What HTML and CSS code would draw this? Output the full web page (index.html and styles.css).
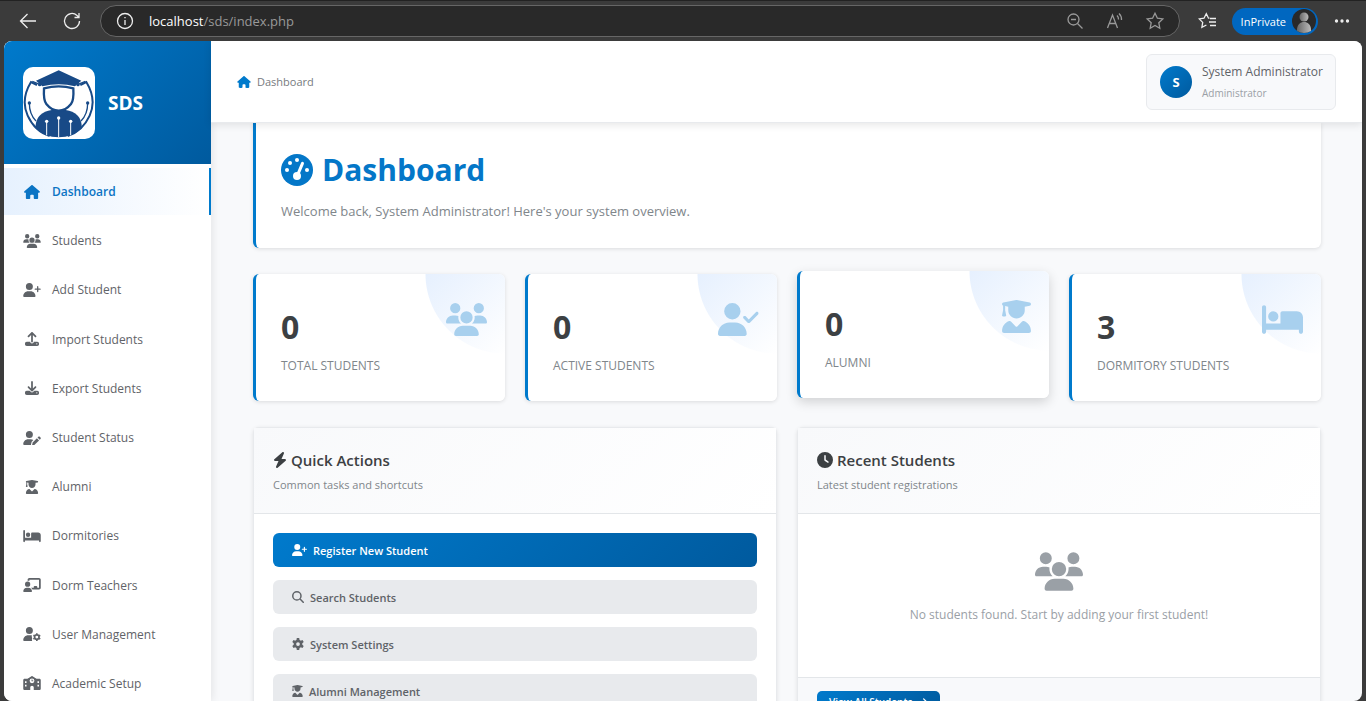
FILE: index.html
```html
<!DOCTYPE html>
<html lang="en">
<head>
<meta charset="utf-8">
<title>Dashboard - SDS</title>
<link rel="stylesheet" href="styles.css">
</head>
<body>
<svg class="defs" aria-hidden="true">
  <symbol id="home" viewBox="0 0 576 512"><path d="M575.8 255.5c0 18-15 32.1-32 32.1h-32l.7 160.2V472c0 22.1-17.9 40-40 40H392c-22.1 0-40-17.9-40-40V384c0-17.700-14.300-32-32-32H256c-17.700 0-32 14.300-32 32v88c0 22.100-17.900 40-40 40H104c-22.100 0-40-17.900-40-40V287.600H32c-18 0-32-14-32-32.100c0-9 3-17 10-24L266.400 8c7-7 15-8 22-8s15 2 21 7L564.800 231.500c8 7 12 15 11 24z"/></symbol>
  <symbol id="users" viewBox="0 0 640 512"><path d="M144 0a80 80 0 1 1 0 160A80 80 0 1 1 144 0zM512 0a80 80 0 1 1 0 160A80 80 0 1 1 512 0zM0 298.700C0 239.800 47.800 192 106.700 192h42.700c15.900 0 31 3.500 44.600 9.700c-1.300 7.200-1.900 14.700-1.900 22.300c0 38.200 16.800 72.500 43.300 96H21.300C9.600 320 0 310.400 0 298.700zM405.300 320h-.7c26.600-23.500 43.300-57.800 43.300-96c0-7.600-.7-15-1.900-22.300c13.600-6.300 28.700-9.700 44.600-9.700h42.700C592.200 192 640 239.800 640 298.700c0 11.800-9.600 21.300-21.300 21.300H405.300zM224 224a96 96 0 1 1 192 0 96 96 0 1 1 -192 0zM128 485.300C128 411.700 187.700 352 261.300 352H378.700C452.300 352 512 411.700 512 485.300c0 14.700-11.900 26.700-26.700 26.700H154.700c-14.700 0-26.700-11.900-26.700-26.700z"/></symbol>
  <symbol id="user-plus" viewBox="0 0 640 512"><path d="M96 128a128 128 0 1 1 256 0A128 128 0 1 1 96 128zM0 482.300C0 383.800 79.800 304 178.300 304h91.400C368.200 304 448 383.800 448 482.300c0 16.400-13.300 29.700-29.700 29.700H29.700C13.300 512 0 498.700 0 482.300zM504 312V248H440c-13.300 0-24-10.700-24-24s10.700-24 24-24h64V136c0-13.300 10.700-24 24-24s24 10.700 24 24v64h64c13.300 0 24 10.700 24 24s-10.700 24-24 24H552v64c0 13.300-10.700 24-24 24s-24-10.700-24-24z"/></symbol>
  <symbol id="user-check" viewBox="0 0 640 512"><path d="M96 128a128 128 0 1 1 256 0A128 128 0 1 1 96 128zM0 482.300C0 383.800 79.800 304 178.300 304h91.400C368.200 304 448 383.800 448 482.300c0 16.400-13.300 29.700-29.700 29.700H29.700C13.300 512 0 498.700 0 482.300zM625 177L497 305c-9.400 9.400-24.600 9.400-33.900 0l-64-64c-9.400-9.400-9.400-24.600 0-33.900s24.600-9.400 33.900 0l47 47L591 143c9.400-9.400 24.600-9.400 33.900 0s9.400 24.600 0 33.900z"/></symbol>
  <symbol id="upload" viewBox="0 0 512 512"><path fill-rule="evenodd" d="M288 109.300V352c0 17.700-14.300 32-32 32s-32-14.300-32-32V109.300l-73.400 73.400c-12.500 12.500-32.800 12.500-45.300 0s-12.500-32.800 0-45.300l128-128c12.500-12.500 32.800-12.500 45.300 0l128 128c12.500 12.500 12.500 32.800 0 45.300s-32.800 12.500-45.300 0L288 109.300zM64 352H192c0 35.300 28.700 64 64 64s64-28.700 64-64H448c35.300 0 64 28.700 64 64v32c0 35.300-28.700 64-64 64H64c-35.300 0-64-28.700-64-64V416c0-35.300 28.700-64 64-64zM432 456a24 24 0 1 0 0-48 24 24 0 1 0 0 48z"/></symbol>
  <symbol id="download" viewBox="0 0 512 512"><path fill-rule="evenodd" d="M288 32c0-17.700-14.300-32-32-32s-32 14.300-32 32V274.700l-73.400-73.400c-12.500-12.500-32.800-12.500-45.300 0s-12.500 32.800 0 45.300l128 128c12.500 12.500 32.800 12.500 45.300 0l128-128c12.500-12.500 12.500-32.800 0-45.300s-32.800-12.500-45.300 0L288 274.700V32zM64 352c-35.300 0-64 28.700-64 64v32c0 35.300 28.700 64 64 64H448c35.300 0 64-28.700 64-64V416c0-35.300-28.700-64-64-64H346.500l-45.300 45.300c-25 25-65.500 25-90.500 0L165.500 352H64zm368 56a24 24 0 1 1 0 48 24 24 0 1 1 0-48z"/></symbol>
  <symbol id="user-pen" viewBox="0 0 640 512"><path d="M96 128a128 128 0 1 1 256 0A128 128 0 1 1 96 128zM0 482c0-98 80-178 178-178h92c36 0 70 11 98 29l-49 50c-8 8-13 18-16 28l-18 70c-3 11-2 22 2 31H30c-17 0-30-13-30-30zM551 211c15-15 40-15 55 0l24 24c15 15 15 40 0 55l-29 30-79-79 29-30zM336 427l163-163 79 79-163 163-7 4-78 20-8-8 20-88z"/></symbol>
  <symbol id="graduate" viewBox="0 0 448 512"><path d="M219.300 .5c3.100-.6 6.300-.6 9.400 0l200 40C439.900 42.700 448 52.600 448 64s-8.100 21.300-19.300 23.500L352 102.900V160c0 70.700-57.300 128-128 128s-128-57.300-128-128V102.900L48 93.300v65.100l15.700 78.400c.9 4.700-.3 9.600-3.300 13.300s-7.600 5.900-12.400 5.900H16c-4.800 0-9.300-2.100-12.400-5.900s-4.300-8.600-3.300-13.300L16 158.400V86.600C6.500 83.300 0 74.300 0 64C0 52.600 8.100 42.700 19.300 40.500l200-40zM111.900 327.700c10.500-3.400 21.800 .4 29.400 8.500l71 75.500c6.300 6.700 17 6.700 23.300 0l71-75.500c7.600-8.100 18.900-11.900 29.400-8.500C401 348.600 448 409.400 448 481.300c0 17-13.800 30.700-30.700 30.700H30.700C13.800 512 0 498.200 0 481.300c0-71.900 47-132.700 111.900-153.600z"/></symbol>
  <symbol id="bed" viewBox="0 0 640 512"><path d="M32 32c17.700 0 32 14.300 32 32V320H288V160c0-17.700 14.300-32 32-32H544c53 0 96 43 96 96V448c0 17.700-14.300 32-32 32s-32-14.300-32-32V416H64v32c0 17.700-14.300 32-32 32s-32-14.300-32-32V64C0 46.300 14.300 32 32 32zm144 96a80 80 0 1 1 0 160 80 80 0 1 1 0-160z"/></symbol>
  <symbol id="teacher" viewBox="0 0 640 512"><path d="M160 64c0-35 29-64 64-64h352c35 0 64 29 64 64v288c0 35-29 64-64 64H337c-12-27-31-49-55-64h102v-32c0-18 14-32 32-32h64c18 0 32 14 32 32v32h64V64H224v49c-19-11-41-17-64-17V64zM64 224a96 96 0 1 1 192 0 96 96 0 1 1-192 0zM0 485c0-73 60-133 133-133h54c73 0 133 60 133 133 0 15-12 27-27 27H27c-15 0-27-12-27-27z"/></symbol>
  <symbol id="user-gear" viewBox="0 0 640 512"><path d="M96 128a128 128 0 1 1 256 0A128 128 0 1 1 96 128zM0 482c0-98 80-178 178-178h92c17 0 34 2 49 7-10 22-12 48-2 71l12 28-10 28c-8 26-4 52 8 74H30c-17 0-30-13-30-30z"/><circle cx="496" cy="370" r="82" fill="none" stroke="currentColor" stroke-width="62"/><path d="M466 228h60v54h-60zM466 458h60v54h-60zM356 325l30-52 48 28-30 52zM558 438l30-52 48 28-30 52zM356 414l30 52 48-28-30-52zM558 301l30 52 48-28-30-52z"/></symbol>
  <symbol id="school" viewBox="0 0 640 512"><path fill-rule="evenodd" d="M302 5c11-7 25-7 36 0l147 91h107c26 0 48 22 48 48v320c0 26-22 48-48 48H384v-96c0-35-29-64-64-64s-64 29-64 64v96H48c-26 0-48-22-48-48V144c0-26 22-48 48-48h107zM64 192v64h56v-64zM64 320v64h56v-64zM520 192v64h56v-64zM520 320v64h56v-64zM320 88a88 88 0 1 0 0 176 88 88 0 1 0 0-176zM304 128h32v32h32v32h-64z"/></symbol>
  <symbol id="gauge" viewBox="0 0 512 512"><circle cx="256" cy="256" r="256"/><g fill="#fff"><circle cx="96" cy="256" r="32"/><circle cx="144" cy="144" r="32"/><circle cx="256" cy="96" r="32"/><circle cx="416" cy="256" r="32"/><circle cx="256" cy="352" r="64"/></g><path d="M268 330L344 150" stroke="#fff" stroke-width="48" stroke-linecap="round"/></symbol>
  <symbol id="bolt" viewBox="0 0 448 512"><path d="M349.400 44.600c5.900-13.700 1.500-29.700-10.600-38.500s-28.600-8-39.900 1.800l-256 224c-10 8.800-13.600 22.900-8.900 35.300S50.700 288 64 288H175.500L98.600 467.400c-5.900 13.700-1.500 29.700 10.600 38.500s28.600 8 39.900-1.800l256-224c10-8.800 13.600-22.900 8.900-35.300s-16.600-20.700-30-20.700H272.500L349.400 44.600z"/></symbol>
  <symbol id="clock" viewBox="0 0 512 512"><path fill-rule="evenodd" d="M256 0a256 256 0 1 1 0 512A256 256 0 1 1 256 0zM232 120V256c0 8 4 15.500 10.700 20l96 64c11 7.400 25.900 4.400 33.300-6.700s4.400-25.900-6.700-33.300L280 243.200V120c0-13.300-10.700-24-24-24s-24 10.700-24 24z"/></symbol>
  <symbol id="search" viewBox="0 0 512 512"><path d="M365 365L480 480" stroke="currentColor" stroke-width="64" stroke-linecap="round"/><circle cx="208" cy="208" r="176" fill="none" stroke="currentColor" stroke-width="64"/></symbol>
  <symbol id="gear" viewBox="0 0 512 512"><circle cx="256" cy="256" r="132" fill="none" stroke="currentColor" stroke-width="104"/><path d="M204 4h104l18 110H186zM204 508h104l18-110H186zM12 175l52-90 104 40-70 121zM448 427l52-90-86-71-70 121zM12 337l52 90 104-40-70-121zM448 85l52 90-86 71-70-121z"/></symbol>
  <symbol id="arrow" viewBox="0 0 448 512"><path d="M32 256H410M256 96L416 256 256 416" fill="none" stroke="currentColor" stroke-width="64" stroke-linecap="round" stroke-linejoin="round"/></symbol>
</svg>

<header class="browser">
  <button class="tool" aria-label="Back"><svg viewBox="0 0 20 20"><path d="M18 10H2.500M9.500 3L2.500 10l7 7"/></svg></button>
  <button class="tool" aria-label="Refresh"><svg viewBox="0 0 20 20"><path d="M17.500 10a7.500 7.500 0 1 1-2.500-5.600L17 6.500M17 2v4.500h-4.500"/></svg></button>
  <div class="address">
    <svg class="thin" viewBox="0 0 20 20"><circle cx="10" cy="10" r="7.500"/><path d="M10 9v5M10 6v1.300"/></svg>
    <span class="url"><span class="host">localhost</span>/sds/index.php</span>
    <button class="tool dim" aria-label="Zoom out"><svg viewBox="0 0 20 20"><circle cx="8.500" cy="8.500" r="5.500"/><path d="M12.500 12.500l5 5M6 8.500h5"/></svg></button>
    <button class="tool dim" aria-label="Read aloud"><svg viewBox="0 0 20 20"><path d="M2.500 17L7.500 4l5 13M4.300 12.500h6.400M12 4.500a5 5 0 0 1 1.500 4M14 2.500a8 8 0 0 1 2.500 6.500"/></svg></button>
    <button class="tool dim" aria-label="Add to favorites"><svg viewBox="0 0 20 20"><path d="M10 2.200l2.400 5 5.400.7-4 3.800 1 5.500-4.800-2.700-4.800 2.700 1-5.500-4-3.800 5.400-.7z"/></svg></button>
  </div>
  <button class="tool" aria-label="Favorites"><svg viewBox="0 0 20 20"><path d="M11.500 7.200h-1L8.300 2.800 6 7.200l-4.800.7 3.500 3.500-.8 5 4.500-2.400M12 7.500h6M11 11h7M12 14.500h6"/></svg></button>
  <button class="private">InPrivate<svg viewBox="0 0 24 24"><defs><linearGradient id="face"><stop offset="0" stop-color="#666"/><stop offset="1" stop-color="#bbb"/></linearGradient></defs><circle cx="12" cy="12" r="12" fill="#292929"/><circle cx="12" cy="8" r="4.500" fill="url(#face)"/><path d="M5 22c-1-12 15-12 14 0q-7 4-14 0z" fill="url(#face)"/></svg></button>
  <button class="tool more" aria-label="Settings and more"><svg viewBox="0 0 20 20"><circle cx="4.500" cy="10" r="1"/><circle cx="10" cy="10" r="1"/><circle cx="15.500" cy="10" r="1"/></svg></button>
</header>

<div class="page">
  <aside class="sidebar">
    <div class="brand">
      <svg class="logo" viewBox="0 0 216 216" role="img" aria-label="SDS logo">
        <rect width="216" height="216" rx="30" fill="#fff"/>
        <clipPath id="disc"><circle cx="107" cy="108" r="103"/></clipPath>
        <g clip-path="url(#disc)">
          <path d="M38 216v-42q4-38 48-45h42q44 7 48 45v42z" fill="#184a87"/>
        </g>
        <path d="M63 64Q107 52 151 64q2 36-7 47-16 20-37 20t-37-20q-9-11-7-47z" fill="#fff" stroke="#184a87" stroke-width="7"/>
        <path d="M107 10l68 31-19 17q-48-12-98 0L39 41z" fill="#184a87"/>
        <g fill="none" stroke="#184a87" stroke-width="6">
          <path d="M42 54L24 45Q-8 98 14 146q22 48 66 61M172 54l18-9q32 53 10 101-22 48-66 61"/>
          <path d="M19 108q0 34 20 54M194 108q0 34-20 54" stroke-width="4"/>
        </g>
        <path d="M28 43l22 9M187 43l-22 9" stroke="#184a87" stroke-width="4"/>
        <g fill="#184a87"><circle cx="19" cy="108" r="5"/><circle cx="194" cy="108" r="5"/><circle cx="50" cy="53" r="5"/><circle cx="165" cy="53" r="5"/></g>
        <g fill="#fff"><circle cx="71" cy="163" r="5"/><circle cx="107" cy="153" r="5"/><circle cx="143" cy="163" r="5"/></g>
        <path d="M71 163v42M107 153v58M143 163v42" stroke="#fff" stroke-width="3"/>
      </svg>
      <span class="brand-name">SDS</span>
    </div>
    <nav class="menu">
      <a class="active" href="#"><svg><use href="#home"/></svg>Dashboard</a>
      <a href="#"><svg><use href="#users"/></svg>Students</a>
      <a href="#"><svg><use href="#user-plus"/></svg>Add Student</a>
      <a href="#"><svg><use href="#upload"/></svg>Import Students</a>
      <a href="#"><svg><use href="#download"/></svg>Export Students</a>
      <a href="#"><svg><use href="#user-pen"/></svg>Student Status</a>
      <a href="#"><svg><use href="#graduate"/></svg>Alumni</a>
      <a href="#"><svg><use href="#bed"/></svg>Dormitories</a>
      <a href="#"><svg><use href="#teacher"/></svg>Dorm Teachers</a>
      <a href="#"><svg><use href="#user-gear"/></svg>User Management</a>
      <a href="#"><svg><use href="#school"/></svg>Academic Setup</a>
    </nav>
  </aside>

  <div class="main">
    <header class="topbar">
      <div class="crumb"><svg><use href="#home"/></svg>Dashboard</div>
      <div class="user">
        <span class="avatar">S</span>
        <div class="who"><span class="name">System Administrator</span><span class="role">Administrator</span></div>
      </div>
    </header>

    <main class="content">
      <section class="welcome">
        <h1><svg><use href="#gauge"/></svg>Dashboard</h1>
        <p>Welcome back, System Administrator! Here's your system overview.</p>
      </section>

      <section class="stats">
        <article class="stat"><div><strong>0</strong><span>TOTAL STUDENTS</span></div><svg><use href="#users"/></svg></article>
        <article class="stat"><div><strong>0</strong><span>ACTIVE STUDENTS</span></div><svg><use href="#user-check"/></svg></article>
        <article class="stat raised"><div><strong>0</strong><span>ALUMNI</span></div><svg class="slim"><use href="#graduate"/></svg></article>
        <article class="stat"><div><strong>3</strong><span>DORMITORY STUDENTS</span></div><svg><use href="#bed"/></svg></article>
      </section>

      <section class="panels">
        <article class="panel">
          <header><h2><svg class="narrow"><use href="#bolt"/></svg>Quick Actions</h2><p>Common tasks and shortcuts</p></header>
          <div class="actions">
            <a class="primary" href="#"><svg class="wide"><use href="#user-plus"/></svg>Register New Student</a>
            <a href="#"><svg><use href="#search"/></svg>Search Students</a>
            <a href="#"><svg><use href="#gear"/></svg>System Settings</a>
            <a href="#"><svg class="narrow"><use href="#graduate"/></svg>Alumni Management</a>
          </div>
        </article>
        <article class="panel">
          <header><h2><svg><use href="#clock"/></svg>Recent Students</h2><p>Latest student registrations</p></header>
          <div class="empty"><svg><use href="#users"/></svg><p>No students found. Start by adding your first student!</p></div>
          <footer><a href="#">View All Students<svg><use href="#arrow"/></svg></a></footer>
        </article>
      </section>
    </main>
  </div>
</div>
</body>
</html>
```
FILE: styles.css
```css
* { box-sizing: border-box; }

body {
  margin: 0;
  height: 100vh;
  display: flex;
  flex-direction: column;
  overflow: hidden;
  background: #3b3b3b;
  color: #5f6368;
  font-family: "Open Sans", "Noto Sans", sans-serif;
  font-size: 13px;
}

h1, h2, p { margin: 0; }
a { color: inherit; text-decoration: none; }
button { border: 0; padding: 0; background: none; color: inherit; font: inherit; }
svg { fill: currentColor; flex: none; }
.defs { position: absolute; width: 0; height: 0; }

/* Browser toolbar */
.browser {
  flex: none;
  height: 41px;
  display: flex;
  align-items: center;
  padding: 0 14px 0 18px;
  border-top: 1px solid #222;
  color: #eee;
}
.tool { display: flex; }
.tool svg, .address svg {
  width: 20px;
  height: 20px;
  fill: none;
  stroke: currentColor;
  stroke-width: 1.300;
}
.browser > .tool + .tool { margin-left: 24px; }
.address {
  flex: 1;
  height: 32px;
  display: flex;
  align-items: center;
  margin: 0 18px;
  padding: 0 14px;
  border: 1px solid #666;
  border-radius: 16px;
  background: #292929;
}
.url { flex: 1; margin-left: 14px; color: #999; }
.host { color: #fff; }
.dim { margin-left: 20px; color: #999; }
.private {
  height: 27px;
  display: flex;
  align-items: center;
  gap: 6px;
  margin: 0 14px;
  padding: 0 2px 0 9px;
  border-radius: 14px;
  background: #0067c0;
  color: #fff;
  font-size: 11px;
}
.private svg { width: 24px; height: 24px; }
.more svg { fill: currentColor; }

/* Page frame */
.page {
  flex: 1;
  min-height: 0;
  display: flex;
  margin: 0 4px;
  border-radius: 8px;
  overflow: hidden;
  background: #f8f9fb;
}
.sidebar {
  flex: none;
  width: 207px;
  background: #fff;
  box-shadow: 2px 0 8px rgba(0, 0, 0, .08);
}
.brand {
  height: 123px;
  display: flex;
  align-items: center;
  gap: 13px;
  padding-left: 19px;
  background: linear-gradient(135deg, #007acc, #005a9e);
}
.logo { width: 72px; height: 72px; }
.brand-name { color: #fff; font-size: 19px; font-weight: 700; }

.menu { padding-top: 4px; }
.menu a {
  display: flex;
  align-items: center;
  margin-bottom: 2px;
  padding: 14px 19px;
  gap: 11px;
  font-size: 12px;
  line-height: 1.6;
}
.menu svg { width: 18px; height: 14px; }
.menu .active {
  border-right: 2px solid #007acc;
  background: linear-gradient(90deg, #e6f1fe, #fff);
  color: #0b74c4;
  font-weight: 600;
}

.main { flex: 1; min-width: 0; display: flex; flex-direction: column; }
.topbar {
  position: relative;
  z-index: 1;
  flex: none;
  height: 82px;
  display: flex;
  align-items: center;
  justify-content: space-between;
  padding: 0 26px;
  border-bottom: 1px solid #e8eaed;
  background: #fff;
  box-shadow: 0 2px 8px rgba(0, 0, 0, .1);
}
.crumb { display: flex; align-items: center; gap: 6px; color: #777b80; font-size: 11px; }
.crumb svg { width: 14px; height: 12px; color: #007acc; }
.user {
  height: 56px;
  display: flex;
  align-items: center;
  gap: 10px;
  padding: 0 12px 0 13px;
  border: 1px solid #e8eaed;
  border-radius: 6px;
  background: #f8f9fb;
}
.avatar {
  width: 32px;
  height: 32px;
  border-radius: 50%;
  background: linear-gradient(135deg, #007acc, #005a9e);
  color: #fff;
  font-weight: 700;
  line-height: 32px;
  text-align: center;
}
.who { display: flex; flex-direction: column; gap: 6px; }
.name { font-size: 12px; }
.role { color: #9aa0a6; font-size: 10px; }

/* Dashboard content */
.content {
  flex: 1;
  min-height: 0;
  overflow: hidden;
  display: flex;
  flex-direction: column;
  gap: 26px;
  padding: 0 41px 0 42px;
}
.content > * { flex: none; }
.welcome {
  height: 125px;
  padding: 24px 25px;
  border-left: 3px solid #007acc;
  border-radius: 0 0 6px 6px;
  background: #fff;
  box-shadow: 0 1px 4px rgba(0, 0, 0, .12);
}
.welcome h1 {
  display: flex;
  align-items: center;
  gap: 9px;
  color: #0477c8;
  font-size: 30px;
  line-height: 46px;
}
.welcome svg { width: 32px; height: 32px; }
.welcome p { margin-top: 8px; color: #80868b; line-height: 20px; }

.stats { display: grid; grid-template-columns: repeat(4, 1fr); gap: 20px; }
.stat {
  height: 127px;
  display: flex;
  justify-content: space-between;
  padding: 29px 18px 0 25px;
  border-left: 3px solid #007acc;
  border-radius: 6px;
  background: radial-gradient(circle 80px at 100% 0, transparent 0 79px, #fff 80px), linear-gradient(135deg, #e6f0fe, #fff) top right / 80px 80px no-repeat, #fff;
  box-shadow: 0 1px 4px rgba(0, 0, 0, .12);
}
.stat.raised { transform: translateY(-3px); box-shadow: 0 4px 12px rgba(0, 0, 0, .16); }
.stat div { display: flex; flex-direction: column; }
.stat strong { color: #3c4043; font-size: 32px; line-height: 48px; }
.stat span { margin-top: 5px; color: #80868b; font-size: 12px; font-weight: 500; line-height: 20px; }
.stat svg { width: 41px; height: 33px; color: #a8d0ee; }
.stat .slim { width: 29px; }

.panels { display: grid; grid-template-columns: repeat(2, 1fr); gap: 20px; }
.panel {
  height: 340px;
  border: 1px solid #e8eaed;
  border-radius: 6px;
  background: #fff;
  box-shadow: 0 1px 4px rgba(0, 0, 0, .1);
}
.panel header {
  height: 86px;
  padding: 20px 19px;
  border-bottom: 1px solid #e3e6e9;
  background: linear-gradient(135deg, #f8f9fb, #fff);
}
.panel h2 {
  display: flex;
  align-items: center;
  gap: 4px;
  color: #3c4043;
  font-size: 15px;
  font-weight: 600;
  line-height: 24px;
}
.panel h2 svg { width: 16px; height: 16px; }
.panel h2 .narrow { width: 14px; }
.panel header p { margin-top: 4px; color: #80868b; font-size: 11px; line-height: 18px; }
.actions { display: flex; flex-direction: column; gap: 13px; padding: 19px; }
.actions a {
  height: 34px;
  display: flex;
  align-items: center;
  gap: 6px;
  padding: 0 19px;
  border-radius: 6px;
  background: #e8eaed;
  font-size: 11px;
  font-weight: 600;
}
.actions svg { width: 12px; height: 12px; }
.actions .wide { width: 15px; }
.actions .narrow { width: 11px; }
.actions .primary { background: linear-gradient(135deg, #007acc, #005a9e); color: #fff; font-weight: 600; }
.empty {
  height: 163px;
  display: flex;
  flex-direction: column;
  align-items: center;
  gap: 15px;
  padding-top: 38px;
  color: #9aa0a6;
  font-size: 12px;
}
.empty svg { width: 48px; height: 39px; }
.panel footer { padding: 13px 19px; border-top: 1px solid #e3e6e9; background: #f8f9fb; }
.panel footer a {
  display: inline-flex;
  align-items: center;
  gap: 6px;
  padding: 2px 12px;
  border-radius: 5px;
  background: linear-gradient(135deg, #007acc, #005a9e);
  color: #fff;
  font-size: 10px;
  font-weight: 600;
  line-height: 18px;
}
.panel footer svg { width: 10px; height: 10px; }
```
